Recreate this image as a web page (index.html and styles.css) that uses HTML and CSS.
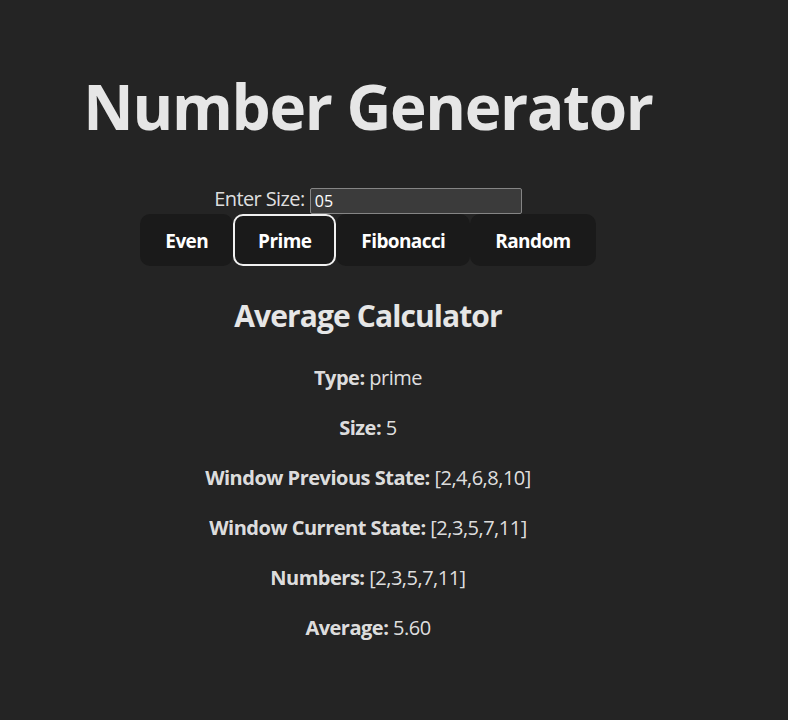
FILE: index.html
```html
<!DOCTYPE html>
<html lang="en">
<head>
<meta charset="utf-8">
<title>Number Generator</title>
<link rel="stylesheet" href="styles.css">
</head>
<body>
<div class="app">
  <h1 class="title">Number Generator</h1>
  <div class="size-row">
    <label class="size-label" for="size">Enter Size:</label>
    <input class="size-input" id="size" type="text" value="05">
  </div>
  <div class="buttons">
    <button class="btn">Even</button><button class="btn btn-active">Prime</button><button class="btn">Fibonacci</button><button class="btn">Random</button>
  </div>
  <h2 class="subtitle">Average Calculator</h2>
  <p class="line"><strong>Type:</strong> prime</p>
  <p class="line"><strong>Size:</strong> 5</p>
  <p class="line"><strong>Window Previous State:</strong> [2,4,6,8,10]</p>
  <p class="line"><strong>Window Current State:</strong> [2,3,5,7,11]</p>
  <p class="line"><strong>Numbers:</strong> [2,3,5,7,11]</p>
  <p class="line"><strong>Average:</strong> 5.60</p>
</div>
</body>
</html>
```
FILE: styles.css
```css
html {
  font-size: 20px;
}
body {
  margin: 0;
  background: #242424;
  color: rgba(255, 255, 255, 0.87);
  font-family: "Open Sans", "Noto Sans", sans-serif;
  line-height: 1.5;
}
.app {
  width: 736px;
  padding-top: 28px;
  text-align: center;
}
.title {
  font-size: 62px;
  letter-spacing: -1.3px;
  line-height: 70px;
  font-weight: 700;
  margin: 43px 0;
  color: #e6e6e6;
}
.size-row {
  height: 30px;
  line-height: 30px;
}
.size-label {
  font-size: 20px;
  letter-spacing: -0.6px;
}
.size-input {
  width: 212px;
  height: 26px;
  box-sizing: border-box;
  background: #3b3b3b;
  border: 1px solid #858585;
  border-radius: 2px;
  color: #fff;
  font-family: inherit;
  font-size: 16px;
  padding: 0 4px;
  vertical-align: middle;
}
.buttons {
  display: flex;
  justify-content: center;
}
.btn {
  font-family: inherit;
  font-size: 19px;
  letter-spacing: -0.6px;
  font-weight: 700;
  line-height: 30px;
  padding: 11px 24px 9px;
  border: 1px solid transparent;
  border-radius: 10px;
  background: #1a1a1a;
  color: #fff;
}
.btn-active {
  border: 2px solid #f0f0f0;
  padding: 10px 23px 8px;
}
.subtitle {
  font-size: 30px;
  letter-spacing: -0.9px;
  line-height: 45px;
  margin: 27px 0 25px;
  color: #e6e6e6;
}
.line {
  font-size: 20px;
  letter-spacing: -0.5px;
  line-height: 30px;
  margin: 20px 0;
}
```
